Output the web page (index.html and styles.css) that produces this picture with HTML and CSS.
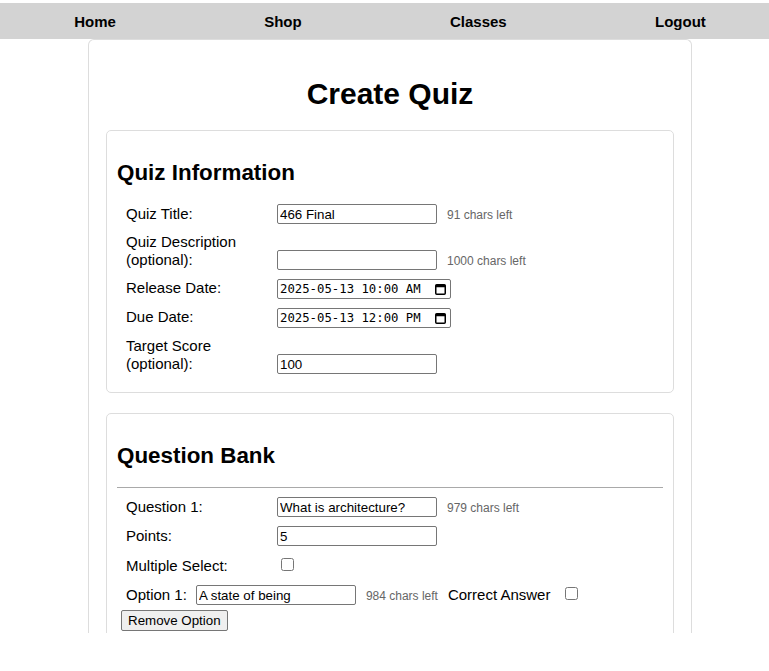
FILE: index.html
```html
<!DOCTYPE html>
<html lang="en">
<head>
<meta charset="utf-8">
<title>Create Quiz</title>
<link rel="stylesheet" href="styles.css">
</head>
<body>
<div class="page">
  <nav class="nav">
    <a class="nav-link" href="#">Home</a>
    <a class="nav-link" href="#">Shop</a>
    <a class="nav-link" href="#">Classes</a>
    <a class="nav-link" href="#">Logout</a>
  </nav>
  <main class="card">
    <h1 class="title">Create Quiz</h1>

    <section class="panel">
      <h2 class="panel-title">Quiz Information</h2>
      <div class="row"><label class="label">Quiz Title:</label><input class="text-input" type="text" value="466 Final"><span class="chars">91 chars left</span></div>
      <div class="row"><label class="label">Quiz Description (optional):</label><input class="text-input" type="text" value=""><span class="chars">1000 chars left</span></div>
      <div class="row"><label class="label">Release Date:</label><span class="date-box"><input class="date-text" type="text" value="2025-05-13 10:00 AM"><svg class="cal" width="11" height="12" viewBox="0 0 11 12"><rect x="0.75" y="1.75" width="9.5" height="9.5" rx="1" fill="none" stroke="#000" stroke-width="1.5"/><rect x="0.75" y="1.75" width="9.5" height="2.5" fill="#000"/></svg></span></div>
      <div class="row"><label class="label">Due Date:</label><span class="date-box"><input class="date-text" type="text" value="2025-05-13 12:00 PM"><svg class="cal" width="11" height="12" viewBox="0 0 11 12"><rect x="0.75" y="1.75" width="9.5" height="9.5" rx="1" fill="none" stroke="#000" stroke-width="1.5"/><rect x="0.75" y="1.75" width="9.5" height="2.5" fill="#000"/></svg></span></div>
      <div class="row row-last"><label class="label">Target Score (optional):</label><input class="text-input" type="text" value="100"></div>
    </section>

    <section class="panel">
      <h2 class="panel-title">Question Bank</h2>
      <hr class="divider">
      <div class="row"><label class="label">Question 1:</label><input class="text-input" type="text" value="What is architecture?"><span class="chars">979 chars left</span></div>
      <div class="row"><label class="label">Points:</label><input class="text-input" type="text" value="5"></div>
      <div class="row"><label class="label">Multiple Select:</label><input class="check" type="checkbox"></div>
      <div class="row row-option"><label class="option-label">Option 1:</label><input class="text-input" type="text" value="A state of being"><span class="chars">984 chars left</span><label class="correct">Correct Answer</label><input class="check check-correct" type="checkbox"></div>
      <div class="button-row"><button class="btn" type="button">Remove Option</button></div>
    </section>
  </main>
</div>
</body>
</html>
```
FILE: styles.css
```css
html {
  overflow: hidden;
}
body {
  margin: 0;
  background: #fff;
  font-family: "Liberation Sans", Arial, sans-serif;
  color: #000;
}
.page {
  width: 780px;
  padding-top: 3px;
}
.nav {
  display: flex;
  justify-content: space-around;
  align-items: center;
  height: 36px;
  background: #d3d3d3;
}
.nav-link {
  font-size: 15px;
  font-weight: bold;
  color: #000;
  text-decoration: none;
}
.card {
  display: block;
  box-sizing: border-box;
  width: 604px;
  height: 594px;
  margin: 0 auto;
  padding: 17px 17px 0;
  border: 1px solid #ddd;
  border-bottom: none;
  border-radius: 6px 6px 0 0;
  overflow: hidden;
}
.title {
  margin: 20px 0 19px;
  font-size: 30px;
  font-weight: bold;
  text-align: center;
}
.panel {
  border: 1px solid #ddd;
  border-radius: 5px;
  padding: 10px;
  margin-bottom: 20px;
}
.panel-title {
  font-size: 22.4px;
  font-weight: bold;
  margin: 0.83em 0;
}
.divider {
  border: none;
  border-top: 1px solid #a9a9a9;
  height: 0;
  margin: 0 0 9px;
}
.row {
  font-size: 15px;
  line-height: 17.5px;
  padding-left: 9px;
  margin-bottom: 9px;
}
.row-last {
  margin-bottom: 8px;
}
.label {
  display: inline-block;
  width: 151px;
}
.option-label {
  margin-right: 9px;
}
.text-input {
  box-sizing: border-box;
  width: 160px;
  height: 20px;
  padding: 1px 2px;
  border: 1px solid #767676;
  border-radius: 2px;
  font-family: "Liberation Sans", Arial, sans-serif;
  font-size: 13.33px;
  color: #000;
  background: #fff;
}
.chars {
  margin-left: 10px;
  font-size: 12px;
  color: #666;
}
.correct {
  margin-left: 10px;
}
.check {
  width: 13px;
  height: 13px;
  margin: 3px 3px 3px 4px;
}
.check-correct {
  margin-left: 15px;
}
.date-box {
  display: inline-flex;
  align-items: center;
  box-sizing: border-box;
  width: 174px;
  height: 20px;
  border: 1px solid #767676;
  border-radius: 2px;
  vertical-align: baseline;
  background: #fff;
}
.date-text {
  flex: 1;
  min-width: 0;
  border: none;
  padding: 0 0 0 2px;
  margin: 0;
  font-family: "DejaVu Sans Mono", "Liberation Mono", monospace;
  font-size: 12.3px;
  color: #000;
  background: transparent;
  outline: none;
}
.cal {
  flex: none;
  margin-right: 4px;
}
.button-row {
  padding-left: 4px;
  margin-top: -4px;
}
.btn {
  box-sizing: border-box;
  height: 21px;
  padding: 1px 6px;
  border: 1px solid #767676;
  border-radius: 2px;
  background: #efefef;
  font-family: "Liberation Sans", Arial, sans-serif;
  font-size: 13.33px;
  color: #000;
}
```
